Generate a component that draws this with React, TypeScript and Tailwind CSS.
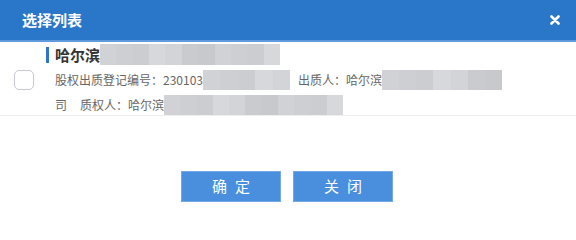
const tiles = ["#d0d2d5", "#c9cbce", "#d6d8db", "#cdcfd2", "#c7c9cc", "#d2d4d7", "#cbcdd0"];

const Mosaic = ({ w, h, cells }: { w: number; h: number; cells: number }) => (
  <div className="flex shrink-0" style={{ width: w, height: h }}>
    {Array.from({ length: cells }).map((_, i) => (
      <div key={i} className="flex-1" style={{ background: tiles[(i * 3) % tiles.length] }} />
    ))}
  </div>
);

export default function App() {
  return (
    <div className="w-[576px] h-[215px] bg-white font-['Noto_Sans_CJK_SC',sans-serif] overflow-hidden">
      <div className="h-[42px] bg-[#2a77c9] border-b-2 border-[#5f9bdc] flex items-center justify-between pl-[22px] pr-[16px]">
        <span className="text-white text-[15px] font-bold">选择列表</span>
        <svg width="10" height="10" viewBox="0 0 10 10">
          <path d="M1.5 1.5 L8.5 8.5 M8.5 1.5 L1.5 8.5" stroke="#fff" strokeWidth="2.6" strokeLinecap="round" />
        </svg>
      </div>
      <div className="flex items-center border-b border-[#eeeeee] h-[74px]">
        <div className="w-[55px] flex justify-center pl-[2px] pr-[10px] pt-[3px]">
          <div className="w-[20px] h-[20px] rounded-[5px] border border-[#c6c9cf] bg-white" />
        </div>
        <div className="flex flex-col gap-[5px] pt-[2px]">
          <div className="flex items-center h-[21px] -ml-[9px]">
            <div className="w-[3px] h-[16px] bg-[#2a77c9] mr-[6px]" />
            <span className="text-[15px] font-bold text-[#333] leading-none">哈尔滨</span>
            <Mosaic w={180} h={21} cells={11} />
          </div>
          <div className="flex items-center h-[20px] text-[12px] text-[#666] leading-none">
            <span>股权出质登记编号：230103</span>
            <Mosaic w={87} h={20} cells={5} />
            <span className="ml-[8px]">出质人：哈尔滨</span>
            <Mosaic w={120} h={20} cells={7} />
          </div>
          <div className="flex items-center h-[20px] text-[12px] text-[#666] leading-none">
            <span>司</span>
            <span className="ml-[13px]">质权人：哈尔滨</span>
            <Mosaic w={179} h={20} cells={11} />
          </div>
        </div>
      </div>
      <div className="flex justify-center gap-[12px] pt-[55px] pr-[2px]">
        <button className="w-[100px] h-[31px] bg-[#4a8fdd] border border-[#73a9e6] text-white text-[15px] tracking-[8px] pl-[8px]">确定</button>
        <button className="w-[100px] h-[31px] bg-[#4a8fdd] border border-[#73a9e6] text-white text-[15px] tracking-[8px] pl-[8px]">关闭</button>
      </div>
    </div>
  );
}
